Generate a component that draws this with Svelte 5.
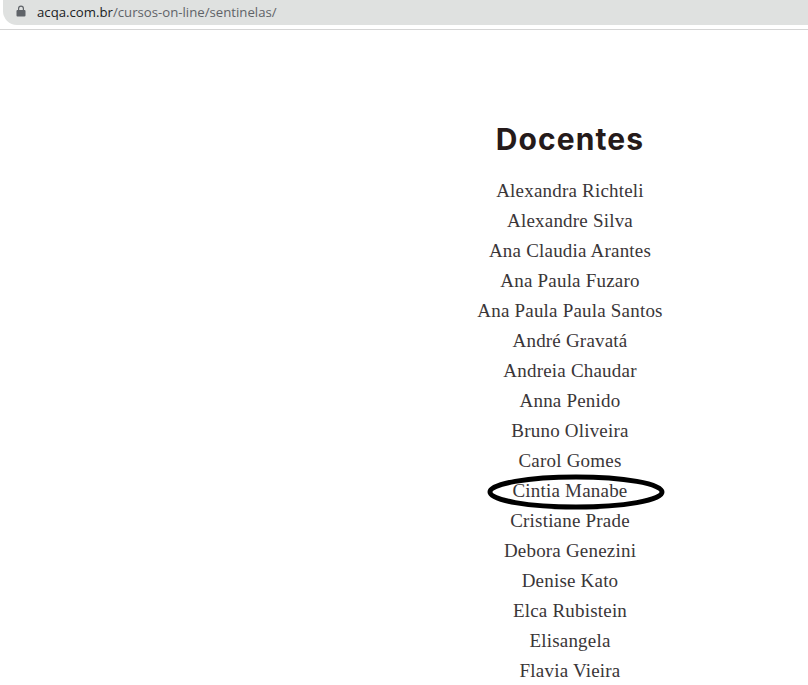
<script>
    const names = [
        'Alexandra Richteli',
        'Alexandre Silva',
        'Ana Claudia Arantes',
        'Ana Paula Fuzaro',
        'Ana Paula Paula Santos',
        'André Gravatá',
        'Andreia Chaudar',
        'Anna Penido',
        'Bruno Oliveira',
        'Carol Gomes',
        'Cintia Manabe',
        'Cristiane Prade',
        'Debora Genezini',
        'Denise Kato',
        'Elca Rubistein',
        'Elisangela',
        'Flavia Vieira',
    ];
    const circled = 'Cintia Manabe';
</script>

<div class="page">
    <div class="toolbar">
        <div class="omnibox">
            <svg class="lock" width="10" height="12" viewBox="0 0 10 12">
                <path d="M2 5V3.600a3 3 0 0 1 6 0V5h.6c.5 0 .9.4.9.9v4.700c0 .5-.4.9-.9.9H1.400c-.5 0-.9-.4-.9-.9V5.900c0-.5.4-.9.9-.9zm1.200 0h3.600V3.600a1.800 1.800 0 0 0-3.600 0z" fill="#5f6368" />
            </svg>
            <span class="url"><span class="host">acqa.com.br</span>/cursos-on-line/sentinelas/</span>
        </div>
    </div>

    <main class="content">
        <section class="docentes">
            <h2>Docentes</h2>
            <ul>
                {#each names as name}
                    <li>
                        {name}
                        {#if name == circled}
                            <svg class="ring" width="180" height="36" viewBox="0 0 180 36">
                                <ellipse cx="90" cy="18" rx="86" ry="15" fill="none" stroke="#000" stroke-width="5" />
                            </svg>
                        {/if}
                    </li>
                {/each}
            </ul>
        </section>
    </main>
</div>

<style>
    :global(body) {
        background: #fff;
        overflow: hidden;
    }
    .page {
        width: 808px;
        height: 685px;
        overflow: hidden;
    }
    .toolbar {
        height: 30px;
        box-sizing: border-box;
        border-bottom: 1px solid #d5d5d5;
    }
    .omnibox {
        display: flex;
        align-items: center;
        height: 25px;
        margin-left: 3px;
        padding-left: 13px;
        background: #dfe1e0;
        border-bottom-left-radius: 14px;
    }
    .lock {
        margin-right: 11px;
        margin-top: -4px;
    }
    .url {
        font-family: 'Open Sans', sans-serif;
        font-size: 13.200px;
        margin-top: -2px;
        color: #5f6368;
    }
    .host {
        color: #202124;
    }
    .content {
        display: flex;
        justify-content: flex-end;
        padding-right: 38px;
    }
    .docentes {
        width: 400px;
        padding-top: 90px;
        text-align: center;
    }
    h2 {
        margin: 0 0 18px;
        font-family: 'Inter', sans-serif;
        font-size: 30px;
        line-height: 38px;
        font-weight: 700;
        letter-spacing: 1.100px;
        color: #251a1a;
    }
    ul {
        margin: 0;
        padding: 0;
        list-style: none;
    }
    li {
        position: relative;
        height: 30px;
        line-height: 30px;
        font-family: 'Liberation Serif', serif;
        font-size: 19px;
        letter-spacing: 0.200px;
        color: #3a3638;
    }
    .ring {
        position: absolute;
        left: 116px;
        top: -2px;
    }
</style>
